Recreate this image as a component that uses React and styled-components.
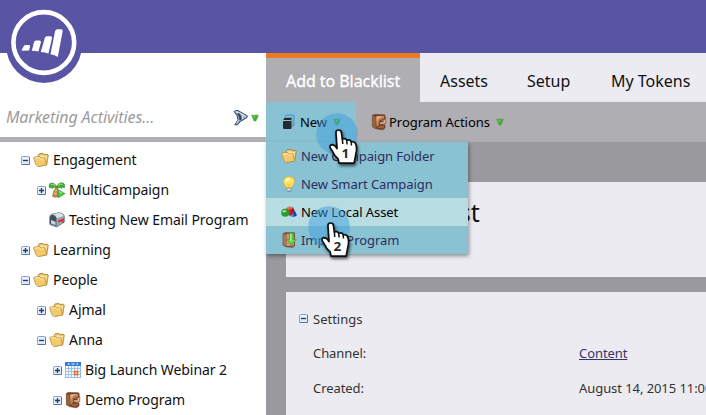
import React from 'react';
import styled, { createGlobalStyle } from 'styled-components';

const Global = createGlobalStyle`
  * { box-sizing: border-box; }
  body { margin: 0; overflow: hidden; font-family: "Noto Sans", "Open Sans", sans-serif; color: #111; }
  svg { display: block; flex: none; overflow: visible; }
`;

const Page = styled.div`
  position: relative;
  display: flex;
  flex-direction: column;
  width: 706px;
  height: 415px;
  overflow: hidden;
  background: #fff;
`;
const Header = styled.header`
  flex: none;
  height: 53px;
  background: #5a54a4;
`;
const LogoSlot = styled.div`
  position: absolute;
  left: 6px;
  top: 7px;
`;
const Columns = styled.div`
  flex: 1;
  display: flex;
  min-height: 0;
`;
const Sidebar = styled.aside`
  flex: none;
  width: 266px;
`;
const Search = styled.div`
  display: flex;
  align-items: flex-end;
  height: 89px;
  padding: 0 7px 8px 6px;
  border-bottom: 5px solid #afaeb2;
`;
const SearchText = styled.span`
  flex: 1;
  font-size: 16px;
  line-height: 24px;
  font-style: italic;
  letter-spacing: -0.1px;
  color: #9c9c9c;
`;
const FilterIcons = styled.div`
  display: flex;
  align-items: center;
  gap: 3px;
  height: 23px;
`;
const Tree = styled.div`
  padding-top: 3px;
`;
const TreeRow = styled.div`
  display: flex;
  align-items: center;
  height: 30px;
  padding-left: ${p => 21 + p.$depth * 16}px;
`;
const Toggle = styled.span`
  flex: none;
  width: 12px;
  display: flex;
`;
const TreeLabel = styled.span`
  padding-left: 4px;
  font-size: 14px;
  line-height: 20px;
  white-space: nowrap;
  letter-spacing: -0.06px;
`;
const Main = styled.main`
  flex: 1;
  min-width: 0;
  display: flex;
  flex-direction: column;
  background: #9a999e;
`;
const Tabs = styled.nav`
  flex: none;
  display: flex;
  height: 49px;
  background: #ecebf2;
`;
const Tab = styled.div`
  flex: none;
  width: ${p => p.$w}px;
  padding-left: 20px;
  border-top: 5px solid ${p => (p.$active ? '#ec7a22' : 'transparent')};
  background: ${p => (p.$active ? '#afaeb2' : 'transparent')};
  color: ${p => (p.$active ? '#fff' : '#111')};
  font-size: 16px;
  line-height: 46px;
  white-space: nowrap;
  letter-spacing: ${p => (p.$active ? -0.06 : 0)}px;
  -webkit-text-stroke: ${p => (p.$active ? '0.3px #fff' : '0')};
`;
const Toolbar = styled.div`
  position: relative;
  flex: none;
  display: flex;
  height: 40px;
  background: #afaeb2;
`;
const ToolButton = styled.div`
  display: flex;
  align-items: center;
  width: ${p => p.$w}px;
  padding-left: 15px;
  background: ${p => (p.$open ? '#89c2d2' : 'transparent')};
  font-size: 13px;
  color: #000;
`;
const ToolLabel = styled.span`
  padding: 0 6px 0 ${p => p.$gap}px;
  white-space: nowrap;
  letter-spacing: -0.04px;
`;
const Menu = styled.div`
  position: absolute;
  left: 0;
  top: 40px;
  z-index: 2;
  width: 202px;
  background: #89c2d2;
  box-shadow: 1px 2px 4px rgba(0, 0, 0, 0.4);
`;
const MenuItem = styled.div`
  display: flex;
  align-items: center;
  gap: 4px;
  height: 28px;
  padding-left: 15px;
  background: ${p => (p.$hot ? '#b7dce2' : 'transparent')};
  color: ${p => (p.$hot ? '#000' : '#2f2d5f')};
  font-size: 13px;
  white-space: nowrap;
  letter-spacing: -0.07px;
`;
const Panels = styled.div`
  display: flex;
  flex-direction: column;
  gap: 15px;
  padding: 40px 0 0 20px;
`;
const Panel = styled.section`
  height: ${p => p.$h}px;
  padding: ${p => p.$pad};
  background: #ecebf2;
`;
const Title = styled.h1`
  margin: 0;
  font-size: 25px;
  font-weight: 400;
  line-height: 34px;
  white-space: nowrap;
  color: #111;
`;
const SectionHead = styled.div`
  display: flex;
  align-items: center;
  gap: 5px;
  height: 33px;
  font-size: 13px;
  color: #333;
`;
const Field = styled.div`
  display: grid;
  grid-template-columns: 266px 1fr;
  align-items: center;
  height: 35px;
  padding-left: 14px;
  font-size: 13px;
  color: #333;
  white-space: nowrap;
  letter-spacing: -0.07px;
`;
const Link = styled.a`
  color: #35346b;
  text-decoration: underline;
`;
const Pointer = styled.div`
  position: absolute;
  z-index: 3;
  left: ${p => p.$x}px;
  top: ${p => p.$y}px;
`;

const Logo = () => (
  <svg width="76" height="76" viewBox="0 0 76 76">
    <circle cx="38" cy="38" r="38" fill="#5a54a4" />
    <circle cx="37.8" cy="35.5" r="30.4" fill="none" stroke="#fff" strokeWidth="4.6" />
    <g fill="#fff">
      <path d="M18 38.8 Q18.5 37.8 20 38 H23 Q24.5 38 24 39.6 L23 43.6 L16.5 43.8 Q15.3 43.8 15.6 43Z" />
      <path d="M28 35.3 Q28.4 33.6 30 33.6 H33.6 Q35.2 33.6 34.9 35.3 L32.5 44.6 Q30 43.9 25.8 43.8Z" />
      <path d="M38.8 31 Q39.3 29.3 41 29.3 H44.6 Q46.4 29.3 46 31 L42.5 46.6 Q39 45.4 34.8 45Z" />
      <path d="M49 24.5 Q49.5 22.3 51.3 22.3 H55 Q57.1 22.3 56.6 24.5 L51.8 50 Q48.8 48 44.5 47.2Z" />
    </g>
  </svg>
);

const Funnel = () => (
  <svg width="15" height="16" viewBox="0 0 15 16">
    <path d="M1 1.5 Q2.5 0 5 .6 L14.3 5.8 Q14.5 8 12.5 8.5 L7.3 11.5 L4.3 15 L1.8 14.8 L5 9.8 Q4.8 5 1 1.5Z" fill="#8398b4" stroke="#394b65" strokeWidth="1" />
    <path d="M2.6 1.6 Q7 2.5 12.8 6.8" stroke="#dbe7f3" strokeWidth="1.2" fill="none" />
    <path d="M5 3.5 Q8 6 7.2 10" stroke="#33425c" strokeWidth="2" fill="none" />
    <path d="M9 5.6 Q10.5 7 9.6 9" stroke="#d5e1ec" strokeWidth="1.3" fill="none" />
    <path d="M5.8 9.8 L3.6 13.5" stroke="#c3d1df" strokeWidth="1.1" />
  </svg>
);

const Caret = () => (
  <svg width="8" height="8" viewBox="0 0 8 8">
    <path d="M.6 1.2 H7.4 L5 6.9 H3Z" fill="#3cae2c" stroke="#559a4f" strokeWidth=".6" />
    <path d="M2 2 H4 V4.6Z" fill="#74d65c" />
  </svg>
);

const Box = ({ open }) => (
  <svg width="9" height="9" viewBox="0 0 9 9">
    <rect x=".5" y=".5" width="8" height="8" rx="1" fill="#dfe9f6" stroke="#86a2ca" />
    <path d="M1.5 2 H7.5" stroke="#f8fbff" />
    <path d="M.6 8.5 H8.5 V1" fill="none" stroke="#4e70a2" strokeWidth=".9" />
    <path d={open ? 'M2 4.5 H7' : 'M2 4.5 H7 M4.5 2 V7'} stroke="#1f3d6b" strokeWidth="1.3" />
  </svg>
);

const Folder = () => (
  <svg width="16" height="16" viewBox="0 0 16 16">
    <path d="M5.2 3 L6.3 1.7 L10 1.3 L11 2.5 L14.2 2.1 L15.3 3 L13.8 12.8 L6 14.3Z" fill="#e3b44f" stroke="#a17b38" strokeWidth=".7" />
    <path d="M6 3.2 L10 2.7 L11 3.8 L14.3 3.4 L13.4 9.5 L8 11Z" fill="#fbe29a" />
    <path d="M.7 6.1 Q.5 5.2 1.5 5 L6.8 4.6 L8 6.1 L11.3 5.7 Q12 5.8 12.1 6.5 L13.6 13 L5.5 14.5 Q4.5 14.7 3.8 13.8 L2.8 12.6Z" fill="#f2ca6b" stroke="#af873e" strokeWidth=".7" />
    <path d="M1.7 6.2 L6.4 5.7 L7.7 7.2 L11 6.8" stroke="#fff0b9" strokeWidth=".9" fill="none" />
  </svg>
);

const Palm = () => (
  <svg width="16" height="16" viewBox="0 0 16 16">
    <path d="M7.2 5 Q4 9 3.6 14.3 Q6 16 9.4 14.5 Q8.2 10 9 5Z" fill="#cf8d4b" stroke="#865022" strokeWidth=".6" />
    <path d="M5.6 8 L8 8.8 M4.8 11 L8 12" stroke="#efc389" />
    <path d="M7.8 4.7 Q5.7 .2 1.3 1.2 Q-.6 2.6 .4 6 Q2 4.8 3 6.6 Q5 4.8 7.8 5.5Z" fill="#42a93c" stroke="#2b8230" strokeWidth=".5" />
    <path d="M7.8 4.8 Q9.5 -.2 14.3 1 Q16.4 2.5 15.5 5.7 Q13.8 4.7 12.8 6.6 Q10.8 5 7.8 5.5Z" fill="#42a93c" stroke="#2b8230" strokeWidth=".5" />
    <path d="M2 2.6 Q5 1.8 6.5 3.7 M9.4 3.5 Q11.5 1.6 13.8 2.5" stroke="#8cda70" strokeWidth="1.2" fill="none" />
    <path d="M9.2 7.6 L16 11.8 L9.2 15.8Z" fill="#4fca43" stroke="#248a2c" strokeWidth=".6" />
    <path d="M10.2 9.6 L13 11.3" stroke="#b1f397" />
  </svg>
);

const Mailbox = () => (
  <svg width="16" height="16" viewBox="0 0 16 16">
    <path d="M.7 5 Q1 2.5 3.5 2 L10 .8 Q14.8 .8 15.3 4.5 V10 L7.8 15 L.8 12.4Z" fill="#98a7b4" stroke="#606d79" strokeWidth=".8" />
    <path d="M3 2.3 L10 1 Q13.8 1 14.6 4 L8 6 Q6.5 2.5 3 2.3Z" fill="#d9e2e9" />
    <path d="M1 5.2 Q1.6 2.8 4 3 Q7 3.7 7.4 7 V14.2 L1 11.8Z" fill="#414f60" />
    <path d="M2 8 L6.6 9.7 V13.2 L2 11.4Z" fill="#cbd3da" />
    <path d="M9.3 8.7 L14.5 6.5 V10.9 L12.6 9.3 L9.5 10.2Z" fill="#eb2f2b" stroke="#b42322" strokeWidth=".4" />
  </svg>
);

const Calendar = () => (
  <svg width="16" height="16" viewBox="0 0 16 16">
    <rect x=".4" y=".4" width="15.2" height="15.2" fill="#f4f9ff" stroke="#7caee2" strokeWidth=".8" />
    <path d="M0 0 H16 V4 H0Z" fill="#397fda" />
    <path d="M5 2 L3 1 V3Z M11 2 L13 1 V3Z M6.5 1.5 H9.5 V2.5 H6.5Z" fill="#e5f3ff" />
    <path d="M3.5 4 V15 M6.5 4 V15 M9.5 4 V15 M12.5 4 V15 M1 6.5 H15 M1 9.5 H15 M1 12.5 H15" stroke="#8db8e5" strokeWidth=".8" />
    <rect x="9.3" y="9.3" width="3.6" height="3.5" fill="#ffad79" stroke="#e65c27" />
  </svg>
);

const Program = () => (
  <svg width="16" height="16" viewBox="0 0 16 16">
    <path d="M1.3 1.6 L3 .5 L13.5 .8 L14.2 2 V5 L11.5 6.3 V10.6 L14 11 V14 L11.5 15.8 L4.4 14.6 L1.4 12.8Z" fill="#7b4024" stroke="#5f3827" strokeWidth=".6" />
    <path d="M1.4 1.8 L4.6 3 V14.2 L1.6 12.6Z" fill="#9c6541" />
    <path d="M5.3 2.4 L13.2 1.8 V4.5 L8.3 6.6 L7.6 11.4 L5.3 12.6Z" fill="#bd8258" />
    <path d="M5.5 2.6 L12 2.1 L7 5 L5.8 9Z" fill="#e2b78f" />
    <path d="M6.5 12.4 L13 11.5 V13.3 L11 14.6 L6 13.6Z" fill="#a3623d" />
    <path d="M8.6 7 L14.8 4.9 V9.8 L9 10.4Z" fill="#d9b294" stroke="#6b412d" strokeWidth=".6" />
    <path d="M9 7.2 Q11.5 8.6 12.4 6.4" fill="none" stroke="#63331f" strokeWidth="1.2" />
  </svg>
);

const Copy = () => (
  <svg width="14" height="16" viewBox="0 0 14 16">
    <path d="M4.3 2.3 Q4.6 1.2 6 1.2 H11.5 Q12.9 1.2 12.9 2.6 V11 L11.6 12.3" fill="none" stroke="#449bd5" strokeWidth="1.2" />
    <path d="M3.6 3.8 H11.2 L9.8 6.1 H2.2Z" fill="#222a30" />
    <rect x="2" y="6.9" width="8.5" height="8" rx=".8" fill="#222a30" />
    <path d="M10.9 5.5 V13.2" stroke="#4e6a79" strokeWidth=".8" fill="none" />
  </svg>
);

const Bulb = () => (
  <svg width="16" height="16" viewBox="0 0 16 16">
    <path d="M5.3 10.8 Q2.2 8.5 2.5 5.2 Q3 .8 8 .6 Q13 .8 13.5 5.2 Q13.7 8.5 10.7 10.8 V12.2 H5.3Z" fill="#ffe461" stroke="#dfa52b" strokeWidth=".7" />
    <path d="M4.2 4.8 Q5 2 8 2.1 Q10 3.5 7 5 Q4 7 4.2 4.8Z" fill="#fffbd5" />
    <path d="M6.2 7.3 L8 10.6 L9.8 7.3" fill="none" stroke="#f6bc32" />
    <path d="M5.8 12 H10.2 V14.5 L8.9 15.6 H7.2 L5.8 14.5Z" fill="#adb0b4" stroke="#70747a" strokeWidth=".6" />
    <path d="M6 13.3 H10" stroke="#f3f4f5" />
  </svg>
);

const Shapes = () => (
  <svg width="16" height="16" viewBox="0 0 16 16">
    <path d="M11.4 2.6 L15.9 11.2 Q13.5 14 9 12.2Z" fill="#4a83df" />
    <path d="M11.4 2.6 L13 12.8 L15.9 11.2Z" fill="#173f9c" />
    <path d="M5 4.4 L8.4 2.4 L12 4.2 V9.7 L8.4 11.8 L5 9.8Z" fill="#e83b2d" />
    <path d="M5 4.4 L8.4 2.4 L12 4.2 L8.5 6Z" fill="#f5694b" />
    <path d="M8.5 6 L12 4.2 V9.7 L8.4 11.8Z" fill="#b91d21" />
    <circle cx="4.2" cy="8.8" r="4" fill="#299b35" />
    <ellipse cx="3.4" cy="7.2" rx="1.8" ry="1.3" fill="#92e281" />
  </svg>
);

const Import = () => (
  <svg width="16" height="16" viewBox="0 0 16 16">
    <path d="M2 1.7 L4 .8 H13.5 V14 L11.5 15.3 L5 14.8 L2 13Z" fill="#8c5735" stroke="#67432f" strokeWidth=".7" />
    <path d="M2.2 2 L5 3 V14.2 L2.4 12.6Z" fill="#a9795a" />
    <path d="M5.5 2 H12.8 V13.6 L5.5 14Z" fill="#c69c78" />
    <path d="M8.6 1 H12 V7.5 H15.2 L10.4 13 L6 7.5 H8.6Z" fill="#6ad548" stroke="#34a42e" strokeWidth=".7" />
    <path d="M9.8 2 V9" stroke="#c9f7a7" />
  </svg>
);

const Click = ({ label }) => (
  <svg width="42" height="54" viewBox="0 0 42 54">
    <defs>
      <filter id={`shade${label}`} x="-50%" y="-50%" width="200%" height="200%">
        <feDropShadow dx="1" dy="2" stdDeviation="1.6" floodColor="#000" floodOpacity=".6" />
      </filter>
    </defs>
    <circle cx="21" cy="21" r="20.8" fill="#3e9fe0" fillOpacity=".5" />
    <g transform="translate(12.4 15.5) scale(1.08 1.03)">
      <path
        filter={`url(#shade${label})`}
        d="M7 4 Q7 1.5 9.4 1.5 Q11.9 1.5 12.1 4 L12.9 10.2 Q16 9 17 11.5 Q20 10.3 21.2 13 Q24.7 12.4 25.5 15.5 Q26.8 20 25.2 26 L23.8 33.6 H9.8 L9 29.5 Q5.5 26.5 4.5 23.5 L1.6 18.5 Q1 15.8 3.5 15.7 Q6.5 16.1 8 19.5Z"
        fill="#fff" stroke="#111" strokeWidth="1.6" strokeLinejoin="round"
      />
      <path d="M12.9 9.5 L13.3 15 M17 11.5 L17.3 15.5 M21.2 13 L21.3 16.5" stroke="#111" strokeWidth="1.4" />
      <text x="15.8" y="28.4" textAnchor="middle" fontFamily="Noto Sans" fontSize="12.5" fontWeight="700" fill="#2b2b2b">{label}</text>
    </g>
  </svg>
);

const rows = [
  { depth: 0, open: true, icon: Folder, text: 'Engagement' },
  { depth: 1, open: false, icon: Palm, text: 'MultiCampaign' },
  { depth: 1, icon: Mailbox, text: 'Testing New Email Program' },
  { depth: 0, open: false, icon: Folder, text: 'Learning' },
  { depth: 0, open: true, icon: Folder, text: 'People' },
  { depth: 1, open: false, icon: Folder, text: 'Ajmal' },
  { depth: 1, open: true, icon: Folder, text: 'Anna' },
  { depth: 2, open: false, icon: Calendar, text: 'Big Launch Webinar 2' },
  { depth: 2, open: false, icon: Program, text: 'Demo Program' },
];

const menu = [
  { icon: Folder, text: 'New Campaign Folder' },
  { icon: Bulb, text: 'New Smart Campaign' },
  { icon: Shapes, text: 'New Local Asset', hot: true },
  { icon: Import, text: 'Import Program' },
];

export default function App() {
  return (
    <Page>
      <Global />
      <Header />
      <LogoSlot><Logo /></LogoSlot>
      <Columns>
        <Sidebar>
          <Search>
            <SearchText>Marketing Activities...</SearchText>
            <FilterIcons><Funnel /><Caret /></FilterIcons>
          </Search>
          <Tree>
            {rows.map(({ depth, open, icon: Icon, text }) => (
              <TreeRow key={text} $depth={depth}>
                <Toggle>{open !== undefined && <Box open={open} />}</Toggle>
                <Icon />
                <TreeLabel>{text}</TreeLabel>
              </TreeRow>
            ))}
          </Tree>
        </Sidebar>
        <Main>
          <Tabs>
            <Tab $w={154} $active>Add to Blacklist</Tab>
            <Tab $w={87}>Assets</Tab>
            <Tab $w={84}>Setup</Tab>
            <Tab $w={115}>My Tokens</Tab>
          </Tabs>
          <Toolbar>
            <ToolButton $w={90} $open><Copy /><ToolLabel $gap={5}>New</ToolLabel><Caret /></ToolButton>
            <ToolButton $w={160}><Program /><ToolLabel $gap={2}>Program Actions</ToolLabel><Caret /></ToolButton>
            <Menu>
              {menu.map(({ icon: Icon, text, hot }) => (
                <MenuItem key={text} $hot={hot}><Icon />{text}</MenuItem>
              ))}
            </Menu>
          </Toolbar>
          <Panels>
            <Panel $h={95} $pad="13px 0 0 14px"><Title>Add to Blacklist</Title></Panel>
            <Panel $h={123} $pad="10px 0 0 13px">
              <SectionHead><Box open />Settings</SectionHead>
              <Field><span>Channel:</span><Link>Content</Link></Field>
              <Field><span>Created:</span><span>August 14, 2015 11:00</span></Field>
            </Panel>
          </Panels>
        </Main>
      </Columns>
      <Pointer $x={315.5} $y={113}><Click label="1" /></Pointer>
      <Pointer $x={307.5} $y={206}><Click label="2" /></Pointer>
    </Page>
  );
}
